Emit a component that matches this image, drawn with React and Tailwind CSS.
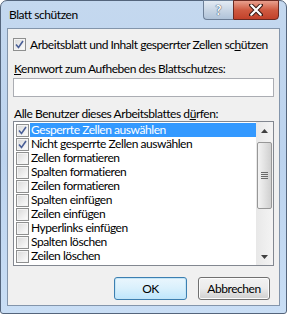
import React from 'react';

const items = [
  ['Gesperrte Zellen auswählen', true],
  ['Nicht gesperrte Zellen auswählen', true],
  ['Zellen formatieren', false],
  ['Spalten formatieren', false],
  ['Zeilen formatieren', false],
  ['Spalten einfügen', false],
  ['Zeilen einfügen', false],
  ['Hyperlinks einfügen', false],
  ['Spalten löschen', false],
  ['Zeilen löschen', false],
];

function Check({ checked }) {
  return (
    <span className="w-[13px] h-[13px] shrink-0 border border-[#8e8f8f] bg-white flex items-center justify-center">
      <span className="w-[11px] h-[11px] border border-[#f4f4f4] bg-gradient-to-br from-[#dcdcdc] to-[#fbfbfb] flex items-center justify-center">
        {checked && (
          <svg width="9" height="9" viewBox="0 0 9 9">
            <path d="M1 4.5 L3.5 7.5 L8 1" fill="none" stroke="#4a5f97" strokeWidth="1.6" />
          </svg>
        )}
      </span>
    </span>
  );
}

function Button({ children, primary }) {
  return (
    <button
      className={
        primary
          ? 'w-[73px] h-[23px] rounded-[3px] border border-[#3c7fb1] bg-gradient-to-b from-[#eaf6fd] via-[#d9f0fc] to-[#bee6fd] shadow-[inset_0_0_0_1px_#c4e5f6] text-black'
          : 'w-[72px] h-[23px] rounded-[3px] border border-[#707070] bg-gradient-to-b from-[#f2f2f2] via-[#ebebeb] to-[#cfcfcf] shadow-[inset_0_0_0_1px_#fcfcfc] text-black'
      }
    >
      {children}
    </button>
  );
}

export default function App() {
  return (
    <div className="w-[287px] h-[314px] overflow-hidden bg-white">
      <div
        className="w-[287px] h-[314px] rounded-t-[7px] rounded-b-[3px] border border-[#54657c] bg-gradient-to-b from-[#c4d8ef] via-[#bcd3ee] to-[#c9def5] flex flex-col px-[6px] pb-[7px] text-black text-[12px] leading-[15px] tracking-[-0.45px]"
        style={{ fontFamily: 'Lato, "Noto Sans", sans-serif' }}
      >
        <div className="h-[27px] shrink-0 flex items-start justify-between">
          <span className="pl-[2px] pt-[6px]">Blatt schützen</span>
          <div className="flex mr-[1px] -mt-[1px] tracking-normal">
            <div className="w-[30px] h-[20px] rounded-bl-[4px] border border-[#6d7f97] border-r-0 bg-gradient-to-b from-[#e3ebf4] via-[#c9d6e5] to-[#b0c3d9] flex items-center justify-center text-white text-[13px] font-bold [text-shadow:0_0_1px_#2b3f5c,0_0_1px_#2b3f5c]">
              ?
            </div>
            <div className="w-[46px] h-[20px] rounded-br-[4px] border border-[#6b2a22] bg-gradient-to-b from-[#e8a08e] via-[#cf5a41] to-[#c2412a] flex items-center justify-center">
              <svg width="14" height="12" viewBox="0 0 14 12">
                <path d="M2 1 L12 11 M12 1 L2 11" stroke="#3a1a14" strokeWidth="4.2" strokeLinecap="round" />
                <path d="M2.3 1.3 L11.7 10.7 M11.7 1.3 L2.3 10.7" stroke="#ffffff" strokeWidth="2.2" strokeLinecap="round" />
              </svg>
            </div>
          </div>
        </div>

        <div className="flex-1 border border-[#8395ab] bg-[#f0f0f0] flex flex-col px-[5px]">
          <label className="mt-[8px] h-[15px] flex items-center gap-[4px] whitespace-nowrap">
            <Check checked />
            <span>
              Arbeitsblatt und Inhalt gesperrter Zellen sc<u>h</u>ützen
            </span>
          </label>

          <div className="mt-[9px] h-[15px] pl-[1px] whitespace-nowrap">
            <u>K</u>ennwort zum Aufheben des Blattschutzes:
          </div>
          <div className="mt-[2px] h-[19px] border border-[#abadb3] bg-white" />

          <div className="mt-[9px] h-[15px] pl-[1px] whitespace-nowrap">
            Alle Benutzer dieses Arbeitsblattes d<u>ü</u>rfen:
          </div>

          <div className="h-[145px] border border-[#828790] bg-white flex">
            <div className="flex-1 pt-[1px] pl-[2px]">
              {items.map(([label, checked], i) => (
                <div key={label} className="h-[14px] flex items-center whitespace-nowrap">
                  <Check checked={checked} />
                  <span
                    className={
                      i === 0
                        ? 'ml-[1px] flex-1 h-[14px] leading-[14px] pl-[1px] bg-[#3399ff] text-white'
                        : 'ml-[1px] pl-[1px] leading-[14px]'
                    }
                  >
                    {label}
                  </span>
                </div>
              ))}
            </div>
            <div className="w-[17px] bg-gradient-to-r from-[#e8e8e8] to-[#f4f4f4] flex flex-col items-center">
              <div className="h-[17px] flex items-center justify-center">
                <svg width="7" height="4" viewBox="0 0 7 4">
                  <path d="M0 4 L3.5 0 L7 4 Z" fill="#404040" />
                </svg>
              </div>
              <div className="mt-[3px] w-[15px] h-[67px] rounded-[2px] border border-[#979797] bg-gradient-to-r from-[#f3f3f3] via-[#e2e2e2] to-[#d0d0d0] flex flex-col items-center justify-center gap-[1px]">
                <span className="w-[7px] h-[1px] bg-[#6a6a6a]" />
                <span className="w-[7px] h-[1px] bg-[#6a6a6a]" />
                <span className="w-[7px] h-[1px] bg-[#6a6a6a]" />
                <span className="w-[7px] h-[1px] bg-[#6a6a6a]" />
              </div>
              <div className="flex-1" />
              <div className="h-[17px] flex items-center justify-center">
                <svg width="7" height="4" viewBox="0 0 7 4">
                  <path d="M0 0 L7 0 L3.5 4 Z" fill="#404040" />
                </svg>
              </div>
            </div>
          </div>

          <div className="mt-[11px] flex justify-end gap-[11px] pr-[4px]">
            <Button primary>OK</Button>
            <Button>Abbrechen</Button>
          </div>
        </div>
      </div>
    </div>
  );
}
